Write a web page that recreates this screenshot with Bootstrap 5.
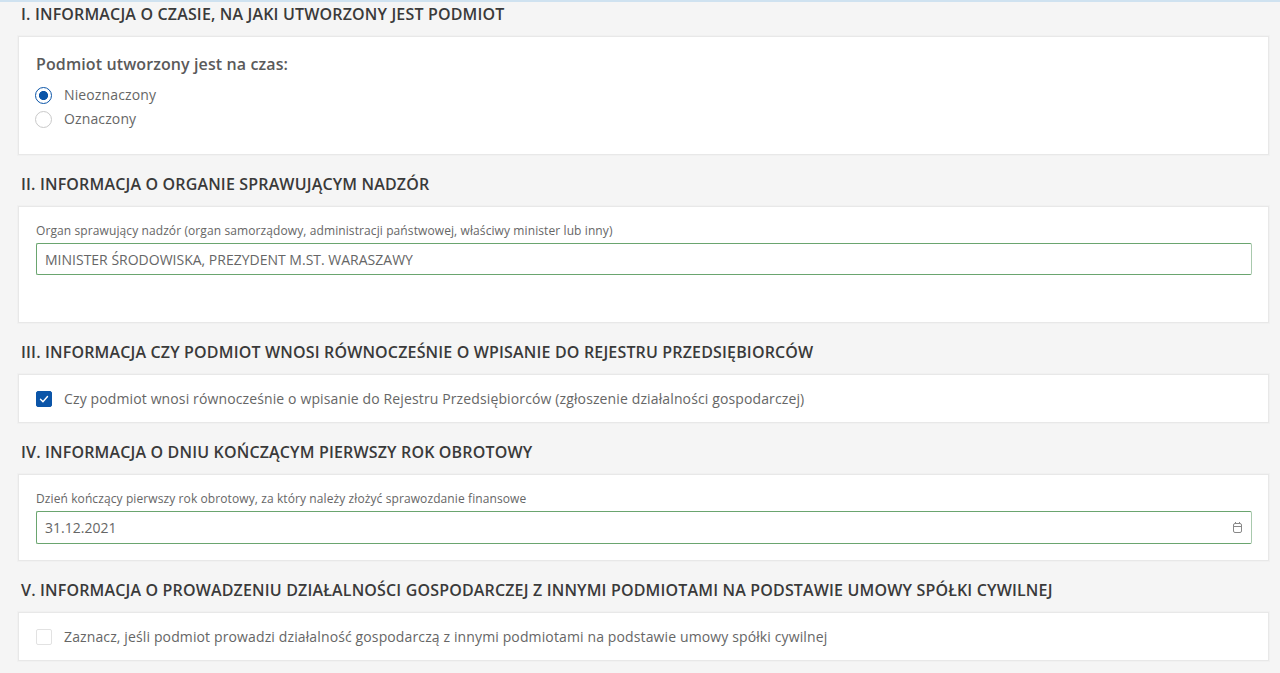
<!DOCTYPE html>
<html lang="pl">
<head>
<meta charset="utf-8">
<title>Formularz</title>
<link href="https://cdn.jsdelivr.net/npm/bootstrap@5.3.0/dist/css/bootstrap.min.css" rel="stylesheet">
<style>
html,body{height:673px;overflow:hidden}
body{background:#f5f5f5;font-family:"Open Sans",sans-serif;color:#5c5c5c;border-top:2px solid #cfe2f0}
.sheet{padding:0 11px 0 18px;margin-top:-1px}
.sect-title{font-family:"Open Sans",sans-serif;font-size:16px;font-weight:600;color:#3a3a3a;line-height:20px;height:35px;margin:0;padding:3px 0 0 3px;letter-spacing:.16px}
.panel{background:#fff;border:1px solid #e8e8e8;box-shadow:0 0 0 1px #f1f1f1;margin-bottom:16px;padding:0 16px 0 17px}
.p1{height:119px;padding-top:17px}
.p2{height:117px;padding-top:16px}
.p3{height:49px;display:flex;align-items:center;padding-top:1px}
.p4{height:87px;padding-top:16px}
.p5{height:49px;display:flex;align-items:center;padding-top:1px}
.ask{font-size:16px;font-weight:600;color:#5a5a5a;line-height:20px;margin-bottom:9px;letter-spacing:.11px}
.choice{display:flex;align-items:center;margin:0;padding:0;min-height:24px;font-size:14px;color:#666;letter-spacing:.125px}
.choice .form-check-input{width:16px;height:16px;margin:0 12px 0 0;float:none;flex:none;border:1px solid #e2e2e2;box-shadow:none}
.choice .form-check-input[type=checkbox]{border-radius:2px}
.choice .form-check-input[type=checkbox]:checked{background-color:#0b55a8;border-color:#0b55a8;background-image:url("data:image/svg+xml,%3csvg xmlns='http://www.w3.org/2000/svg' viewBox='0 0 20 20'%3e%3cpath fill='none' stroke='%23fff' stroke-linecap='round' stroke-linejoin='round' stroke-width='2' d='m5 10.5 3.5 3.5 6.5-7.5'/%3e%3c/svg%3e")}
.choice .form-check-input[type=radio]{width:17px;height:17px;margin-left:-1px;border-color:#c9c9c9}
.choice .form-check-input[type=radio]:checked{background-color:#fff;border-color:#0b55a8;background-image:radial-gradient(circle,#0b55a8 0,#0b55a8 4.2px,#fff 4.9px)}
.choice .form-check-label{line-height:20px}
.fld-label{font-size:12px;color:#666;line-height:16px;margin-bottom:4px;display:block;letter-spacing:.1px}
.fld{border:1px solid #6aa56f;border-right-color:#a8c9ad;border-radius:2px;height:32px;font-size:14px;color:#666;padding:0 8px;box-shadow:none;font-family:"Open Sans",sans-serif}
.p4 .fld{height:33px}
.fld:focus{border-color:#6aa56f;border-right-color:#a8c9ad;box-shadow:none;color:#666}
.fld-wrap{position:relative}
.cal{position:absolute;right:10px;top:11px;width:9px;height:11px;display:block}
</style>
</head>
<body>
<div class="sheet">
  <h2 class="sect-title">I. INFORMACJA O CZASIE, NA JAKI UTWORZONY JEST PODMIOT</h2>
  <section class="panel p1">
    <div class="ask">Podmiot utworzony jest na czas:</div>
    <div class="form-check choice">
      <input class="form-check-input" type="radio" name="czas" id="r1" checked>
      <label class="form-check-label" for="r1">Nieoznaczony</label>
    </div>
    <div class="form-check choice">
      <input class="form-check-input" type="radio" name="czas" id="r2">
      <label class="form-check-label" for="r2">Oznaczony</label>
    </div>
  </section>

  <h2 class="sect-title">II. INFORMACJA O ORGANIE SPRAWUJĄCYM NADZÓR</h2>
  <section class="panel p2">
    <label class="fld-label" for="f1">Organ sprawujący nadzór (organ samorządowy, administracji państwowej, właściwy minister lub inny)</label>
    <input class="form-control fld" id="f1" type="text" value="MINISTER ŚRODOWISKA, PREZYDENT M.ST. WARASZAWY">
  </section>

  <h2 class="sect-title">III. INFORMACJA CZY PODMIOT WNOSI RÓWNOCZEŚNIE O WPISANIE DO REJESTRU PRZEDSIĘBIORCÓW</h2>
  <section class="panel p3">
    <div class="form-check choice">
      <input class="form-check-input" type="checkbox" id="c1" checked>
      <label class="form-check-label" for="c1">Czy podmiot wnosi równocześnie o wpisanie do Rejestru Przedsiębiorców (zgłoszenie działalności gospodarczej)</label>
    </div>
  </section>

  <h2 class="sect-title">IV. INFORMACJA O DNIU KOŃCZĄCYM PIERWSZY ROK OBROTOWY</h2>
  <section class="panel p4">
    <label class="fld-label" for="f2">Dzień kończący pierwszy rok obrotowy, za który należy złożyć sprawozdanie finansowe</label>
    <div class="fld-wrap">
      <input class="form-control fld" id="f2" type="text" value="31.12.2021">
      <svg class="cal" viewBox="0 0 9 11" fill="none" stroke="#888" stroke-width="1"><rect x=".5" y="1.5" width="8" height="9" rx="1.5"/><path d="M.5 4.5h8M2.5 0v2M6.5 0v2"/></svg>
    </div>
  </section>

  <h2 class="sect-title">V. INFORMACJA O PROWADZENIU DZIAŁALNOŚCI GOSPODARCZEJ Z INNYMI PODMIOTAMI NA PODSTAWIE UMOWY SPÓŁKI CYWILNEJ</h2>
  <section class="panel p5">
    <div class="form-check choice">
      <input class="form-check-input" type="checkbox" id="c2">
      <label class="form-check-label" for="c2">Zaznacz, jeśli podmiot prowadzi działalność gospodarczą z innymi podmiotami na podstawie umowy spółki cywilnej</label>
    </div>
  </section>
</div>
</body>
</html>
